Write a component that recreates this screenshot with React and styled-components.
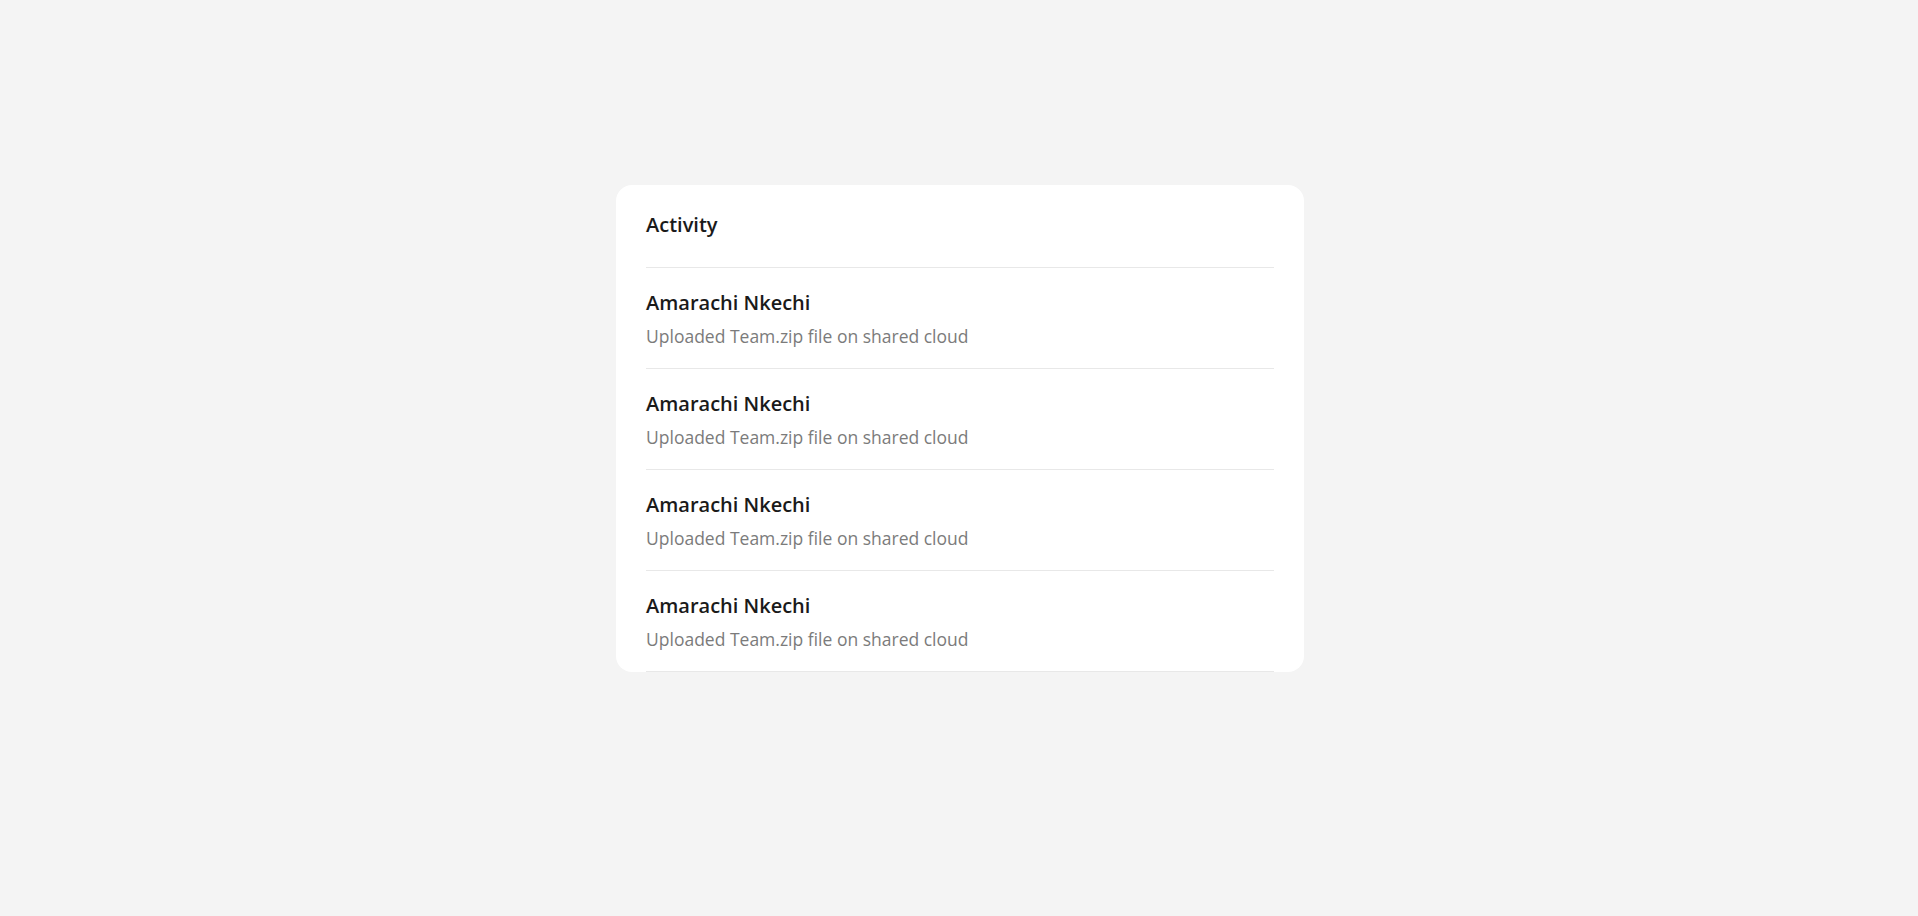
import React from "react";
import styled, { createGlobalStyle } from "styled-components";

const GlobalStyle = createGlobalStyle`
  html, body {
    margin: 0;
    padding: 0;
    background: #f4f4f4;
    font-family: "Open Sans", "Noto Sans", sans-serif;
  }
`;

const Page = styled.div`
  min-height: 916px;
  display: flex;
  justify-content: center;
  align-items: flex-start;
  padding: 185px 0 0 2px;
  box-sizing: border-box;
`;

const Card = styled.section`
  width: 688px;
  background: #ffffff;
  border-radius: 16px;
  padding: 0 30px;
  box-sizing: border-box;
`;

const Header = styled.div`
  padding: 26px 0 28px;
  border-bottom: 1px solid #e8e8e8;
`;

const Title = styled.h2`
  margin: 0;
  font-size: 20px;
  line-height: 28px;
  font-weight: 600;
  color: #1a1a1a;
`;

const Row = styled.div`
  display: flex;
  flex-direction: column;
  gap: 8px;
  padding: 22px 0 20px;
  border-bottom: 1px solid #e8e8e8;
`;

const Name = styled.div`
  font-size: 20px;
  line-height: 26px;
  font-weight: 600;
  color: #1a1a1a;
`;

const Detail = styled.div`
  font-size: 17.5px;
  line-height: 24px;
  color: #7b7b7b;
`;

const activity = [
  { name: "Amarachi Nkechi", text: "Uploaded Team.zip file on shared cloud" },
  { name: "Amarachi Nkechi", text: "Uploaded Team.zip file on shared cloud" },
  { name: "Amarachi Nkechi", text: "Uploaded Team.zip file on shared cloud" },
  { name: "Amarachi Nkechi", text: "Uploaded Team.zip file on shared cloud" },
];

export default function App() {
  return (
    <>
      <GlobalStyle />
      <Page>
        <Card>
          <Header>
            <Title>Activity</Title>
          </Header>
          {activity.map((item, index) => (
            <Row key={index}>
              <Name>{item.name}</Name>
              <Detail>{item.text}</Detail>
            </Row>
          ))}
        </Card>
      </Page>
    </>
  );
}
